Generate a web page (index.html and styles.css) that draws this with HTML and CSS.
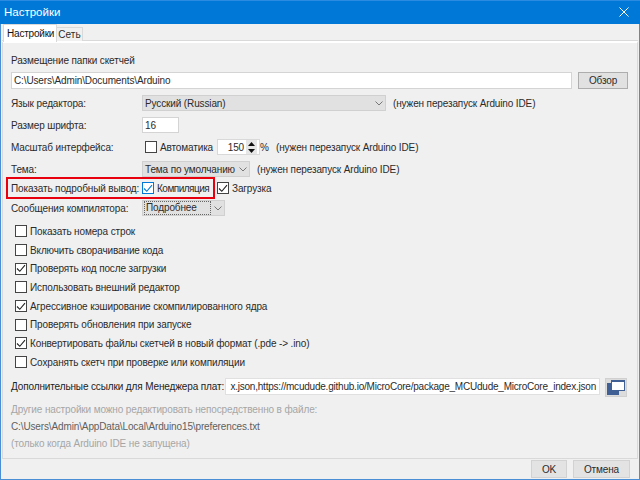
FILE: index.html
```html
<!DOCTYPE html>
<html lang="ru">
<head>
<meta charset="utf-8">
<title>Настройки</title>
<link rel="stylesheet" href="styles.css">
</head>
<body>
<div class="window">
  <header class="titlebar">
    <span class="title">Настройки</span>
    <svg class="close" width="10" height="10" viewBox="0 0 10 10"><path d="M0.5 0.5L9.5 9.5M9.5 0.5L0.5 9.5" stroke="#fff" stroke-width="1" fill="none"/></svg>
  </header>
  <nav class="tabs">
    <span class="tab active">Настройки</span>
    <span class="tab net">Сеть</span>
  </nav>
  <main class="panel">
    <div class="row label-row">Размещение папки скетчей</div>
    <div class="row path-row">
      <div class="input grow">C:\Users\Admin\Documents\Arduino</div>
      <div class="btn browse">Обзор</div>
    </div>
    <div class="row form-row lang-row">
      <span class="lbl">Язык редактора:</span>
      <div class="combo lang"><span class="combo-text">Русский (Russian)</span><svg class="chev" width="8" height="5" viewBox="0 0 8 5"><path d="M0.5 0.5L4 4L7.5 0.5" fill="none" stroke="#777"/></svg></div>
      <span class="note">(нужен перезапуск Arduino IDE)</span>
    </div>
    <div class="row form-row size-row">
      <span class="lbl">Размер шрифта:</span>
      <div class="input size">16</div>
    </div>
    <div class="row form-row scale-row">
      <span class="lbl">Масштаб интерфейса:</span>
      <label class="check auto"><span class="box"></span>Автоматика</label>
      <div class="spinner">
        <span class="spin-val">150</span>
        <span class="spin-btns">
          <svg width="7" height="4" viewBox="0 0 7 4"><path d="M3.5 0L7 4H0Z" fill="#111"/></svg>
          <svg width="7" height="4" viewBox="0 0 7 4"><path d="M0 0H7L3.5 4Z" fill="#111"/></svg>
        </span>
      </div>
      <span class="percent">%</span>
      <span class="note scale-note">(нужен перезапуск Arduino IDE)</span>
    </div>
    <div class="row form-row theme-row">
      <span class="lbl">Тема:</span>
      <div class="combo theme"><span class="combo-text">Тема по умолчанию</span><svg class="chev" width="8" height="5" viewBox="0 0 8 5"><path d="M0.5 0.5L4 4L7.5 0.5" fill="none" stroke="#777"/></svg></div>
      <span class="note">(нужен перезапуск Arduino IDE)</span>
    </div>
    <div class="row form-row verbose-row">
      <span class="lbl">Показать подробный вывод:</span>
      <label class="check compile"><span class="box focus"><svg width="10" height="9" viewBox="0 0 10 9"><path d="M1 4.5L3.8 7.3L9 1.2" fill="none" stroke="#0078d7" stroke-width="1.1"/></svg></span>Компиляция</label>
      <label class="check upload"><span class="box"><svg width="10" height="9" viewBox="0 0 10 9"><path d="M1 4.5L3.8 7.3L9 1.2" fill="none" stroke="#222" stroke-width="1.1"/></svg></span>Загрузка</label>
      <span class="highlight"></span>
    </div>
    <div class="row form-row compiler-row">
      <span class="lbl">Сообщения компилятора:</span>
      <div class="combo compiler"><span class="combo-text dotted">Подробнее</span><svg class="chev" width="8" height="5" viewBox="0 0 8 5"><path d="M0.5 0.5L4 4L7.5 0.5" fill="none" stroke="#777"/></svg></div>
    </div>
    <div class="options">
      <label class="check"><span class="box"></span>Показать номера строк</label>
      <label class="check"><span class="box"></span>Включить сворачивание кода</label>
      <label class="check"><span class="box"><svg width="10" height="9" viewBox="0 0 10 9"><path d="M1 4.5L3.8 7.3L9 1.2" fill="none" stroke="#222" stroke-width="1.1"/></svg></span>Проверять код после загрузки</label>
      <label class="check"><span class="box"></span>Использовать внешний редактор</label>
      <label class="check"><span class="box"><svg width="10" height="9" viewBox="0 0 10 9"><path d="M1 4.5L3.8 7.3L9 1.2" fill="none" stroke="#222" stroke-width="1.1"/></svg></span>Агрессивное кэширование скомпилированного ядра</label>
      <label class="check"><span class="box"></span>Проверять обновления при запуске</label>
      <label class="check"><span class="box"><svg width="10" height="9" viewBox="0 0 10 9"><path d="M1 4.5L3.8 7.3L9 1.2" fill="none" stroke="#222" stroke-width="1.1"/></svg></span>Конвертировать файлы скетчей в новый формат (.pde -&gt; .ino)</label>
      <label class="check"><span class="box"></span>Сохранять скетч при проверке или компиляции</label>
    </div>
    <div class="row urls-row">
      <span class="urls-lbl">Дополнительные ссылки для Менеджера плат:</span>
      <div class="input urls"><span>x.json,https://mcudude.github.io/MicroCore/package_MCUdude_MicroCore_index.json</span></div>
      <div class="icon-btn">
        <svg width="19" height="15" viewBox="0 0 19 15">
          <rect x="0" y="3" width="12" height="12" fill="#3f5f95"/>
          <rect x="4" y="0" width="14" height="11" fill="#3f5f95"/>
          <rect x="5" y="2" width="12" height="8" fill="#fff"/>
        </svg>
      </div>
    </div>
    <div class="hint">Другие настройки можно редактировать непосредственно в файле:</div>
    <div class="hint path">C:\Users\Admin\AppData\Local\Arduino15\preferences.txt</div>
    <div class="hint">(только когда Arduino IDE не запущена)</div>
  </main>
  <footer class="footer">
    <div class="btn ok">OK</div>
    <div class="btn cancel">Отмена</div>
  </footer>
</div>
</body>
</html>
```
FILE: styles.css
```css
* { box-sizing: border-box; }
html, body { margin: 0; padding: 0; }
body {
  width: 640px;
  height: 480px;
  overflow: hidden;
  font-family: "Liberation Sans", Arial, sans-serif;
  font-size: 10px;
  letter-spacing: -0.13px;
  color: #2b2b2b;
}
.window {
  width: 640px;
  height: 480px;
  display: flex;
  flex-direction: column;
  background: #f0f0f0;
  border: 1px solid #4a8fd6;
  border-top: 0;
}
.titlebar {
  height: 24px;
  margin: 0 -1px;
  padding: 0 11px 1px 4px;
  flex: none;
  display: flex;
  align-items: center;
  justify-content: space-between;
  background: #0078d7;
  border-top: 1px solid #2a8be0;
  color: #fff;
  font-size: 11.5px;
  letter-spacing: 0;
}
.tabs {
  height: 17px;
  flex: none;
  display: flex;
  align-items: flex-end;
  padding-left: 2px;
  position: relative;
  z-index: 1;
}
.tab {
  height: 14px;
  display: flex;
  align-items: center;
  border: 1px solid #d9d9d9;
  border-left: 0;
  border-bottom: 0;
  background: #f0f0f0;
}
.tab.net {
  width: 26px;
  justify-content: center;
  letter-spacing: 0.1px;
}
.tab.active {
  height: 18px;
  width: 54px;
  margin-bottom: -1px;
  padding: 0 0 0 3px;
  background: #fff;
  border: 1px solid #d9d9d9;
  border-bottom: 0;
  color: #111;
  letter-spacing: -0.2px;
}
.panel {
  height: 418px;
  width: 636px;
  margin-left: 1px;
  flex: none;
  border: 1px solid #d9d9d9;
  border-top: 2px solid #fff;
  box-shadow: 0 -1px 0 #d9d9d9;
  padding: 9px 9px 0 8px;
  display: flex;
  flex-direction: column;
}
.row { display: flex; align-items: center; flex: none; position: relative; }
.label-row { height: 16px; margin-bottom: 4px; }
.path-row { height: 17px; margin-bottom: 6px; gap: 6px; }
.grow { flex: 1; }
.input {
  height: 17px;
  background: #fff;
  border: 1px solid #d4d4d4;
  padding: 0 2px;
  display: flex;
  align-items: center;
  white-space: nowrap;
  overflow: hidden;
}
.btn {
  background: #e1e1e1;
  border: 1px solid #adadad;
  display: flex;
  align-items: center;
  justify-content: center;
}
.browse { width: 50px; height: 17px; }
.form-row { height: 16px; margin-bottom: 6px; }
.lbl { width: 131px; flex: none; white-space: nowrap; }
.combo {
  height: 16px;
  background: #e1e1e1;
  border: 1px solid #d0d0d0;
  display: flex;
  align-items: center;
  justify-content: space-between;
  padding: 0 2px 0 2px;
  flex: none;
}
.lang { width: 244px; }
.theme { width: 108px; }
.compiler { width: 83px; }
.chev { flex: none; }
.combo-text { white-space: nowrap; }
.dotted {
  width: 67px;
  height: 14px;
  line-height: 12px;
  border: 1px dotted #666;
  margin-left: -1px;
  padding-left: 1px;
}
.note { margin-left: 7px; white-space: nowrap; }
.size { width: 37px; height: 16px; }
.check { display: flex; align-items: center; white-space: nowrap; }
.box {
  width: 12px;
  height: 12px;
  flex: none;
  background: #fff;
  border: 1px solid #444;
  margin-right: 3px;
  display: flex;
  align-items: center;
  justify-content: center;
}
.box.focus { border-color: #0078d7; }
.auto { margin-left: 3px; width: 66px; flex: none; }
.spinner {
  width: 43px;
  height: 16px;
  margin-left: 6px;
  padding-right: 2px;
  background: #fff;
  border: 1px solid #d9d9d9;
  display: flex;
  align-items: center;
  justify-content: flex-end;
  flex: none;
}
.spin-val { margin-right: 2px; }
.spin-btns {
  width: 11px;
  height: 14px;
  background: #e6e6e6;
  display: flex;
  flex-direction: column;
  align-items: center;
  justify-content: space-around;
}
.spin-btns svg { display: block; }
.percent { width: 9px; flex: none; }
.scale-note { margin-left: 7px; }
.verbose-row { height: 16px; margin-top: -3px; margin-bottom: 4px; }
.compile { width: 75px; flex: none; letter-spacing: -0.5px; }
.highlight {
  position: absolute;
  left: -5px;
  top: -3px;
  width: 209px;
  height: 22px;
  border: 2px solid #e8000f;
  pointer-events: none;
}
.options {
  display: grid;
  grid-auto-rows: 18.7px;
  padding-left: 4px;
  margin-bottom: 6px;
  flex: none;
}
.urls-row { height: 19px; margin-bottom: 4px; align-items: flex-start; }
.urls-lbl { width: 214px; height: 17px; line-height: 17px; flex: none; white-space: nowrap; color: #222; }
.urls { width: 375px; height: 17px; flex: none; justify-content: flex-end; border-color: #e0e0e0; padding-right: 3px; letter-spacing: -0.22px; }
.icon-btn {
  width: 22px;
  height: 19px;
  margin-left: 5px;
  flex: none;
  background: #dcdcdc;
  border: 1px solid #d0d0d0;
  display: flex;
  align-items: center;
  justify-content: center;
}
.hint { height: 17px; display: flex; align-items: center; color: #a6a6a6; flex: none; }
.hint.path { color: #5f5f5f; }
.footer {
  flex: 1;
  display: flex;
  justify-content: flex-end;
  gap: 6px;
  padding: 1px 9px 0 0;
}
.footer .btn { height: 18px; background: #e3e3e3; border-color: #d2d2d2; }
.ok { width: 36px; }
.cancel { width: 57px; }
```
